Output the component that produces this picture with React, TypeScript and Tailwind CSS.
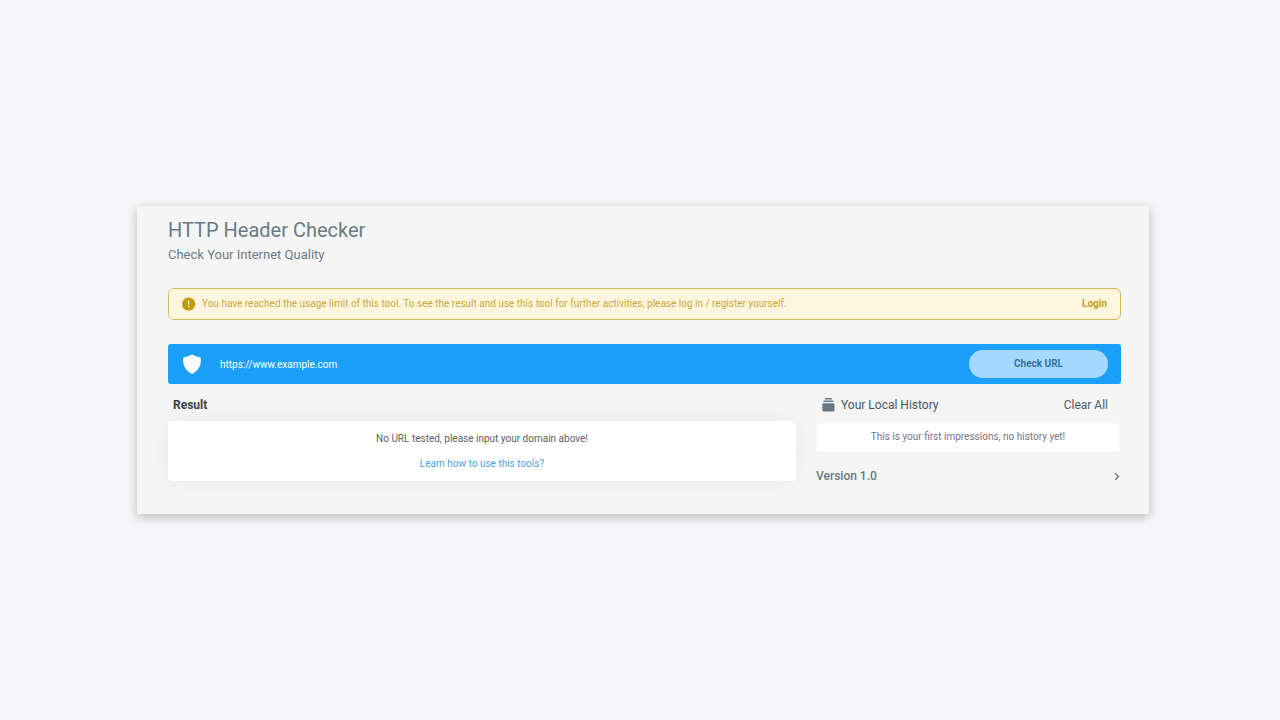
import React from "react";

function AlertIcon() {
  return (
    <svg viewBox="0 0 14 14" className="size-[14px] shrink-0" aria-hidden="true">
      <circle cx="6.7" cy="7" r="6.6" fill="#bf9a12" />
      <path d="M6.700 3.500v4.200M6.700 9.100v1.300" stroke="#fff6dd" strokeWidth="1.300" />
    </svg>
  );
}

function ShieldIcon() {
  return (
    <svg viewBox="0 0 20 20" className="size-5 shrink-0" fill="#fff" aria-hidden="true">
      <path d="M10 .3C12.300 2 15.500 3 18.700 3.500C19.500 10 17.400 16.500 10 19.900C2.600 16.500.5 10 1.300 3.500C4.500 3 7.700 2 10 .3Z" />
    </svg>
  );
}

function CollectionIcon() {
  return (
    <svg viewBox="0 0 14 14" className="size-[14px] shrink-0" fill="#687884" aria-hidden="true">
      <rect x="4" y="0" width="7" height="1.400" rx=".5" />
      <rect x="2.500" y="2.500" width="10" height="1.500" rx=".6" />
      <rect x="1.300" y="5.200" width="12.200" height="8.300" rx="1.300" />
    </svg>
  );
}

function ChevronIcon() {
  return (
    <svg viewBox="0 0 8 8" className="size-2" fill="none" stroke="#65737d" strokeWidth="1.300" aria-hidden="true">
      <path d="M2.200 1.200L5.500 4.500L2.200 7.800" />
    </svg>
  );
}

export default function App() {
  return (
    <main className="flex min-h-screen flex-col justify-center bg-[#f7f7f9] pr-[131px] pl-[137px] font-[Roboto,sans-serif] text-[10px] leading-4">
      <div className="bg-[#f5f5f5] pt-[10px] pr-7 pb-[27px] pl-[31px] shadow-[0_3px_10px_rgba(0,0,0,0.25)]">
        <header className="text-[#6b7a84]">
          <h1 className="text-xl leading-7">HTTP Header Checker</h1>
          <p className="text-[13px] leading-[22px]">Check Your Internet Quality</p>
        </header>

        <div role="alert" className="mt-[22px] flex h-8 items-center gap-[6px] rounded-md border border-[#d6bb5c] bg-[#fff6dd] px-[13px] text-[#c9a741]">
          <AlertIcon />
          <p className="flex-1">You have reached the usage limit of this tool. To see the result and use this tool for further activities, please log in / register yourself.</p>
          <a href="#login" className="font-bold text-[#c49c26]">Login</a>
        </div>

        <form className="mt-6 flex h-10 items-center rounded-[3px] bg-[#1a9ffb] pr-[13px] pl-[14px]" onSubmit={(e) => e.preventDefault()}>
          <ShieldIcon />
          <input type="text" aria-label="URL" placeholder="https://www.example.com" className="mx-[18px] min-w-0 flex-1 bg-transparent pt-[2px] text-white outline-none placeholder:text-white" />
          <button type="submit" className="h-7 w-[139px] rounded-full bg-[#a3d9fe] font-bold text-[#33709f]">Check URL</button>
        </form>

        <div className="mt-[10px] flex gap-5">
          <section className="min-w-0 flex-1">
            <h2 className="pl-[5px] text-xs leading-[22px] font-bold text-[#36424b]">Result</h2>
            <div className="mt-[5px] rounded-[4px] bg-white pt-[10px] pb-[9px] text-center shadow-[0_0_24px_rgba(0,0,0,0.05)]">
              <p className="text-[#5d5b69]">No URL tested, please input your domain above!</p>
              <a href="#learn" className="mt-[9px] block text-[#4d9fe6]">Learn how to use this tools?</a>
            </div>
          </section>

          <section className="w-[305px]">
            <div className="flex items-center pr-[13px] pl-[5px] text-xs leading-[22px]">
              <CollectionIcon />
              <h2 className="ml-[6px] flex-1 text-[#4b5660]">Your Local History</h2>
              <button type="button" className="text-[#565766]">Clear All</button>
            </div>
            <p className="mt-[5px] mr-[1px] rounded-[4px] border border-[#f0f0f0] bg-white py-[7px] text-center text-[#777482]">This is your first impressions, no history yet!</p>
            <button type="button" className="mt-3 flex w-full items-center justify-between text-xs leading-[22px] font-medium text-[#6b7a84]">
              <span>Version 1.0</span>
              <ChevronIcon />
            </button>
          </section>
        </div>
      </div>
    </main>
  );
}
